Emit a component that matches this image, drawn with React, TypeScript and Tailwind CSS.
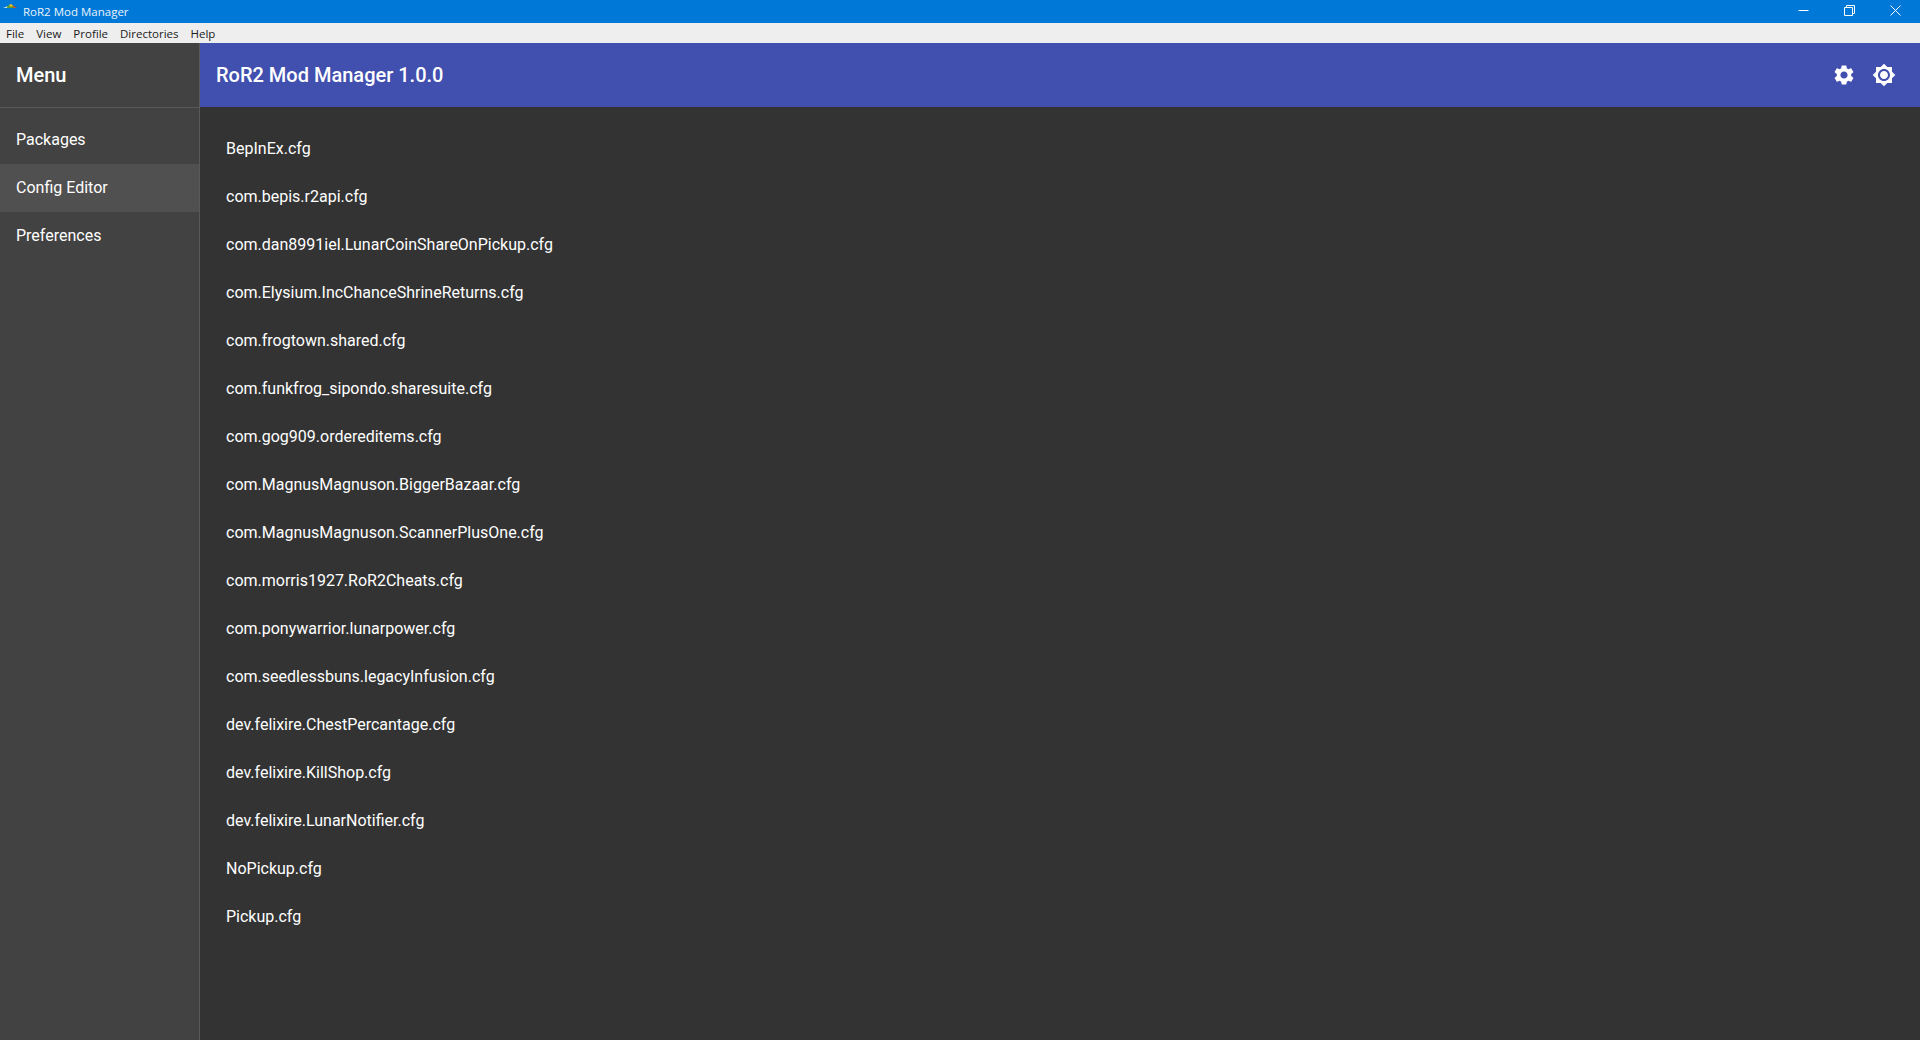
const files = [
  "BepInEx.cfg",
  "com.bepis.r2api.cfg",
  "com.dan8991iel.LunarCoinShareOnPickup.cfg",
  "com.Elysium.IncChanceShrineReturns.cfg",
  "com.frogtown.shared.cfg",
  "com.funkfrog_sipondo.sharesuite.cfg",
  "com.gog909.ordereditems.cfg",
  "com.MagnusMagnuson.BiggerBazaar.cfg",
  "com.MagnusMagnuson.ScannerPlusOne.cfg",
  "com.morris1927.RoR2Cheats.cfg",
  "com.ponywarrior.lunarpower.cfg",
  "com.seedlessbuns.legacyInfusion.cfg",
  "dev.felixire.ChestPercantage.cfg",
  "dev.felixire.KillShop.cfg",
  "dev.felixire.LunarNotifier.cfg",
  "NoPickup.cfg",
  "Pickup.cfg",
];

const menus = ["File", "View", "Profile", "Directories", "Help"];
const navItems = ["Packages", "Config Editor", "Preferences"];

function TitleBar() {
  return (
    <div className="h-[23px] shrink-0 bg-[#0078d7] flex items-center text-white font-['Open_Sans',sans-serif] text-[11.5px]">
      <svg width="16" height="16" viewBox="0 0 16 16" className="ml-[2px] mr-[5px] mb-[3px] shrink-0">
        <path d="M1 6 L6 4 L6 6 Z" fill="#cfe6f5" />
        <path d="M5 4.5 L8 2.5 L12 4 L13 6 L5 6 Z" fill="#5f9e2a" />
        <path d="M7 3 L9 2 L11 3.5 L9 5 Z" fill="#e8c020" />
        <path d="M11 3.5 L15 6 L11 6 Z" fill="#c8502a" />
      </svg>
      <span className="leading-none text-[#eaf4fc]">RoR2 Mod Manager</span>
      <div className="ml-auto mr-[2px] flex items-center h-full">
        <button className="w-[46px] h-full flex items-center justify-center">
          <svg width="11" height="11" viewBox="0 0 11 11" className="mb-[3px]">
            <path d="M0.5 5.5 H10.5" stroke="#fff" fill="none" />
          </svg>
        </button>
        <button className="w-[46px] h-full flex items-center justify-center">
          <svg width="11" height="11" viewBox="0 0 11 11" className="mb-[3px]">
            <path d="M0.5 2.5 H8.5 V10.5 H0.5 Z M2.5 2.5 V0.5 H10.5 V8.5 H8.5" stroke="#fff" fill="none" />
          </svg>
        </button>
        <button className="w-[46px] h-full flex items-center justify-center">
          <svg width="11" height="11" viewBox="0 0 11 11" className="mb-[3px]">
            <path d="M0.5 0.5 L10.5 10.5 M10.5 0.5 L0.5 10.5" stroke="#fff" fill="none" />
          </svg>
        </button>
      </div>
    </div>
  );
}

function MenuBar() {
  return (
    <div className="h-[20px] shrink-0 bg-[#eeeeee] flex items-center pl-[6px] pt-[2px] gap-[12px] text-[11.5px] text-[#1a1a1a] font-['Open_Sans',sans-serif]">
      {menus.map((m) => (
        <span key={m} className="leading-none">
          {m}
        </span>
      ))}
    </div>
  );
}

function Sidebar() {
  return (
    <aside className="w-[200px] shrink-0 bg-[#424242] border-r border-[#595959] text-white flex flex-col">
      <div className="h-[65px] shrink-0 border-b border-[#595959] flex items-center pl-4 text-[20px] font-medium">
        Menu
      </div>
      <nav className="pt-2 flex flex-col">
        {navItems.map((item) => (
          <div
            key={item}
            className={
              item === "Config Editor"
                ? "h-12 flex items-center pl-4 text-base bg-[#505050]"
                : "h-12 flex items-center pl-4 text-base"
            }
          >
            {item}
          </div>
        ))}
      </nav>
    </aside>
  );
}

function Header() {
  return (
    <header className="h-16 shrink-0 bg-[#414fae] text-white flex items-center pl-4 pr-6">
      <h1 className="text-[20px] font-medium">RoR2 Mod Manager 1.0.0</h1>
      <div className="ml-auto flex items-center gap-4">
        <svg width="24" height="24" viewBox="0 0 24 24" fill="#fff">
          <path d="M19.14 12.94c.04-.3.06-.61.06-.94 0-.32-.02-.64-.07-.94l2.03-1.58c.18-.14.23-.41.12-.61l-1.92-3.32c-.12-.22-.37-.29-.59-.22l-2.39.96c-.5-.38-1.03-.7-1.62-.94l-.36-2.54c-.04-.24-.24-.41-.48-.41h-3.84c-.24 0-.43.17-.47.41l-.36 2.54c-.59.24-1.13.57-1.62.94l-2.39-.96c-.22-.08-.47 0-.59.22L2.74 8.87c-.12.21-.08.47.12.61l2.03 1.58c-.05.3-.09.63-.09.94s.02.64.07.94l-2.03 1.58c-.18.14-.23.41-.12.61l1.92 3.32c.12.22.37.29.59.22l2.39-.96c.5.38 1.03.7 1.62.94l.36 2.54c.05.24.24.41.48.41h3.84c.24 0 .44-.17.47-.41l.36-2.54c.59-.24 1.13-.56 1.62-.94l2.39.96c.22.08.47 0 .59-.22l1.92-3.32c.12-.22.07-.47-.12-.61l-2.01-1.58zM12 15.6c-1.98 0-3.6-1.62-3.6-3.6s1.62-3.6 3.6-3.6 3.6 1.62 3.6 3.6-1.62 3.6-3.6 3.6z" />
        </svg>
        <svg width="24" height="24" viewBox="0 0 24 24" fill="#fff">
          <path d="M20 8.69V4h-4.69L12 .69 8.69 4H4v4.69L.69 12 4 15.31V20h4.69L12 23.31 15.31 20H20v-4.69L23.31 12 20 8.69zM12 18c-3.31 0-6-2.69-6-6s2.69-6 6-6 6 2.69 6 6-2.69 6-6 6zm0-10c-2.21 0-4 1.79-4 4s1.79 4 4 4 4-1.79 4-4-1.79-4-4-4z" />
        </svg>
      </div>
    </header>
  );
}

export default function App() {
  return (
    <div className="h-[1040px] flex flex-col overflow-hidden font-['Roboto',sans-serif] bg-[#333333]">
      <TitleBar />
      <MenuBar />
      <div className="flex flex-1 min-h-0">
        <Sidebar />
        <div className="flex-1 flex flex-col min-w-0">
          <Header />
          <main className="flex-1 pt-[18px] pl-[26px] text-white text-base bg-[#333333]">
            {files.map((f) => (
              <div key={f} className="h-12 flex items-center">
                {f}
              </div>
            ))}
          </main>
        </div>
      </div>
    </div>
  );
}
